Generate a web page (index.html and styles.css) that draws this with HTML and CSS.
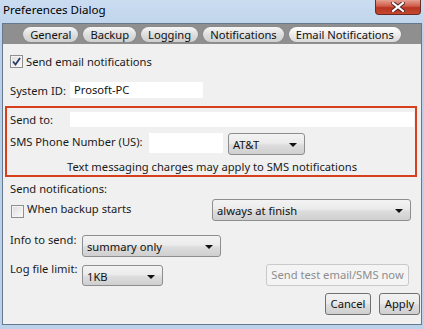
FILE: index.html
```html
<!DOCTYPE html>
<html>
<head>
<meta charset="utf-8">
<link rel="stylesheet" href="styles.css">
</head>
<body>
<div class="window">
  <div class="titlebar">
    <span class="title">Preferences Dialog</span>
    <div class="close">
      <svg width="14" height="10" viewBox="0 0 14 10"><path d="M2 1 L12 9 M12 1 L2 9" stroke="#4a2020" stroke-width="4" stroke-linecap="square"/><path d="M2 1 L12 9 M12 1 L2 9" stroke="#ffffff" stroke-width="2.2" stroke-linecap="square"/></svg>
    </div>
  </div>
  <div class="client">
    <div class="tabbar">
      <span class="tab">General</span>
      <span class="tab">Backup</span>
      <span class="tab">Logging</span>
      <span class="tab">Notifications</span>
      <span class="tab active">Email Notifications</span>
    </div>
    <div class="content">
      <div class="row r-email">
        <span class="cb checked"><svg width="9" height="9" viewBox="0 0 9 9"><path d="M1 4.5 L3.5 7.5 L8 1" fill="none" stroke="#2c3a66" stroke-width="1.8"/></svg></span>
        <span>Send email notifications</span>
      </div>
      <div class="row r-sysid">
        <span class="lbl w-sys">System ID:</span>
        <span class="input sysid">Prosoft-PC</span>
      </div>
      <div class="redbox">
        <div class="row r-sendto">
          <span class="lbl w-sys">Send to:</span>
          <span class="input sendto"></span>
        </div>
        <div class="row r-sms">
          <span class="lbl w-sms">SMS Phone Number (US):</span>
          <span class="input phone"></span>
          <span class="select carrier">AT&amp;T<i class="arrow"></i></span>
        </div>
        <div class="note">Text messaging charges may apply to SMS notifications</div>
      </div>
      <div class="row r-sendnot">Send notifications:</div>
      <div class="row r-when">
        <span class="cb"></span>
        <span class="when-lbl">When backup starts</span>
        <span class="select finish">always at finish<i class="arrow"></i></span>
      </div>
      <div class="row r-info">
        <span class="lbl w-info">Info to send:</span>
        <span class="select summary">summary only<i class="arrow"></i></span>
      </div>
      <div class="row r-log">
        <span class="lbl w-info">Log file limit:</span>
        <span class="select kb">1KB<i class="arrow"></i></span>
        <span class="btn test">Send test email/SMS now</span>
      </div>
      <div class="row r-btns">
        <span class="btn cancel">Cancel</span>
        <span class="btn apply">Apply</span>
      </div>
    </div>
  </div>
</div>
</body>
</html>
```

FILE: styles.css
```css
* { box-sizing: border-box; }
html, body { margin: 0; padding: 0; }
body {
  width: 424px;
  height: 329px;
  overflow: hidden;
  font-family: "Noto Sans", "Open Sans", sans-serif;
  font-size: 11.2px;
  color: #1a1a1a;
  white-space: nowrap;
}
.window {
  width: 424px;
  height: 329px;
  background: linear-gradient(#cadcf0, #b9d0ea 40px, #bcd2ea);
  padding: 0 2px 4px 2px;
  display: flex;
  flex-direction: column;
}
.titlebar {
  height: 23px;
  display: flex;
  align-items: flex-start;
  justify-content: space-between;
  flex: none;
}
.title {
  margin-left: 1px;
  line-height: 20px;
  font-size: 11.6px;
  color: #000;
}
.close {
  width: 46px;
  height: 15px;
  margin-right: 1px;
  border: 1px solid #6b2b24;
  border-top: none;
  border-radius: 0 0 4px 4px;
  background: linear-gradient(#e5a092, #cf5a47 45%, #b83422 55%, #c4492f);
  display: flex;
  align-items: center;
  justify-content: center;
}
.client {
  flex: 1;
  display: flex;
  flex-direction: column;
  border: 1px solid #68788c;
  background: #f0f0f0;
}
.tabbar {
  height: 20px;
  background: #8f8f8f;
  display: flex;
  justify-content: center;
  align-items: center;
  gap: 5px;
  padding-top: 1px;
}
.tab {
  height: 15px;
  line-height: 15px;
  padding: 0 7px;
  border-radius: 8px;
  background: linear-gradient(#f7f7f7, #dedede 50%, #cfcfcf);
  color: #111;
  box-shadow: 0 0 1px #6a6a6a;
}
.tab.active {
  background: linear-gradient(#ffffff, #ececec 50%, #dadada);
}
.content {
  flex: 1;
  display: flex;
  flex-direction: column;
  padding: 9px 1px 0 7px;
}
.row {
  display: flex;
  align-items: center;
}
.r-email { height: 16px; }
.cb {
  width: 13px;
  height: 13px;
  border: 1px solid #8e8f8f;
  background: linear-gradient(135deg, #dcdcdc, #fbfbfb);
  box-shadow: inset 0 0 0 1px #f4f4f4;
  margin-right: 3px;
  display: flex;
  align-items: center;
  justify-content: center;
  flex: none;
}
.r-sysid { height: 16px; margin-top: 13px; }
.lbl { flex: none; }
.w-sys { width: 60px; }
.w-sms { width: 139px; }
.w-info { width: 72px; }
.input {
  background: #fff;
  height: 16px;
  line-height: 16px;
  padding-left: 4px;
  color: #111;
  flex: none;
}
.sysid { width: 133px; }
.redbox {
  margin: 8px 3px 0 -5px;
  border: 2px solid #d6401c;
  padding: 4px 1px 1px 3px;
}
.r-sendto { height: 15px; }
.sendto { flex: 1; height: 15px; }
.r-sms { height: 22px; margin-top: 6px; align-items: flex-start; }
.r-sms .lbl { line-height: 18px; }
.phone { width: 74px; height: 20px; }
.select {
  position: relative;
  height: 22px;
  line-height: 21px;
  padding-left: 4px;
  border: 1px solid #8c8e90;
  border-radius: 3px;
  background: linear-gradient(#f3f3f3, #ebebeb 45%, #dddddd 55%, #cfcfcf);
  color: #111;
  flex: none;
}
.arrow {
  position: absolute;
  right: 7px;
  top: 9px;
  width: 0;
  height: 0;
  border-left: 4px solid transparent;
  border-right: 4px solid transparent;
  border-top: 4px solid #111;
}
.carrier { width: 77px; margin-left: 5px; }
.note {
  margin-top: 5px;
  height: 14px;
  line-height: 14px;
  text-align: center;
}
.r-sendnot { height: 14px; margin-top: 4px; }
.r-when { height: 22px; margin-top: 4px; }
.r-when .cb { margin-left: 1px; margin-top: 3px; }
.when-lbl { margin-top: -3px; }
.finish { width: 199px; margin-left: auto; margin-right: 9px; }
.r-info { height: 22px; margin-top: 14px; align-items: flex-start; }
.r-info .lbl, .r-log .lbl { line-height: 14px; margin-top: -2px; }
.summary { width: 139px; }
.r-log { height: 22px; margin-top: 7px; align-items: flex-start; }
.kb { width: 81px; margin-top: 1px; height: 21px; }
.btn {
  height: 22px;
  line-height: 20px;
  border: 1px solid #707070;
  border-radius: 3px;
  background: linear-gradient(#f2f2f2, #ebebeb 45%, #dddddd 55%, #cfcfcf);
  text-align: center;
  color: #111;
  flex: none;
}
.test {
  margin-left: auto;
  margin-right: 11px;
  width: 143px;
  color: #8d8d8d;
  border-color: #c9c9c9;
  background: #f4f4f4;
}
.r-btns { height: 22px; margin-top: 7px; justify-content: flex-end; gap: 8px; }
.cancel { width: 46px; }
.apply { width: 41px; }
```
